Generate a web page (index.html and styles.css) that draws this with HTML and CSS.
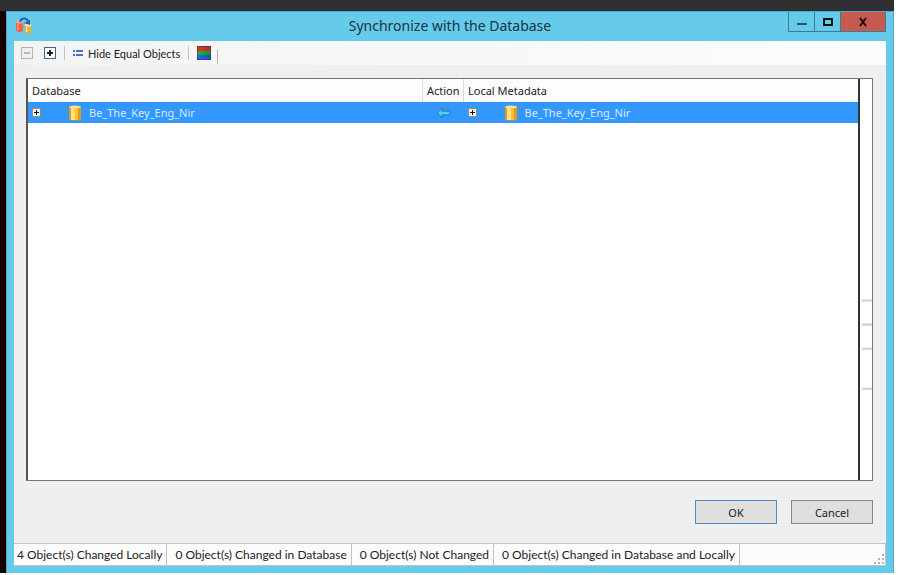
FILE: index.html
```html
<!DOCTYPE html>
<html lang="en">
<head>
    <meta charset="UTF-8">
    <meta name="viewport" content="width=device-width, initial-scale=1.0">
    <title>Synchronize with the Database</title>
    <link rel="stylesheet" href="styles.css">
</head>
<body>
    <div class="desktop">
        <main class="window">
            <header class="title-bar">
                <svg class="app-icon" width="18" height="18" viewBox="0 0 18 18">
                    <path d="M1 5v8c0 2.500 7 2.500 7 0V5z" fill="#f0614c"/>
                    <ellipse cx="4.500" cy="5" rx="3.500" ry="1.500" fill="#ffa792"/>
                    <path d="M3 7v6" stroke="#ffb3a3"/>
                    <path d="M10 8v7c0 2.500 6 2.500 6 0V8z" fill="#f0ae2b"/>
                    <ellipse cx="13" cy="8" rx="3" ry="1.500" fill="#ffe9a0"/>
                    <path d="M11.500 10v5" stroke="#fff0b5"/>
                    <path d="M5 5C6 1 11 0 13 4" fill="none" stroke="#2461b5" stroke-width="2"/>
                    <path d="M9 6l6-3v5z" fill="#2461b5"/>
                </svg>
                <h1 class="title">Synchronize with the Database</h1>
                <div class="window-buttons">
                    <button class="window-button" aria-label="Minimize">
                        <svg width="12" height="10" viewBox="0 0 12 10"><path d="M1 7h10" stroke="#2c5666" stroke-width="2"/></svg>
                    </button>
                    <button class="window-button" aria-label="Maximize">
                        <svg width="12" height="10" viewBox="0 0 12 10"><rect x="2" y="2" width="8" height="6" fill="none" stroke="#0b161b" stroke-width="2"/></svg>
                    </button>
                    <button class="window-button close" aria-label="Close">
                        <svg width="12" height="10" viewBox="0 0 12 10"><path d="M3 1l6 8M9 1L3 9" stroke="#1d0c0b" stroke-width="2"/></svg>
                    </button>
                </div>
            </header>

            <div class="client">
                <div class="toolbar">
                    <button class="tool" aria-label="Collapse all" disabled>
                        <svg width="12" height="12" viewBox="0 0 12 12"><rect x=".5" y=".5" width="11" height="11" fill="#f0f0f0" stroke="#b4b4b4"/><path d="M3 6h6" stroke="#aaa" stroke-width="1.500"/></svg>
                    </button>
                    <button class="tool" aria-label="Expand all">
                        <svg width="12" height="12" viewBox="0 0 12 12"><rect x=".5" y=".5" width="11" height="11" fill="#fff" stroke="#3f6992"/><path d="M3 6h6M6 3v6" stroke="#222" stroke-width="2"/></svg>
                    </button>
                    <span class="separator"></span>
                    <button class="tool">
                        <svg width="10" height="8" viewBox="0 0 10 8"><path d="M0 2h2M3 2h7M0 6h2M3 6h7" stroke="#4a70d6" stroke-width="2"/></svg>
                        Hide Equal Objects
                    </button>
                    <span class="separator"></span>
                    <button class="tool" aria-label="Colors">
                        <svg width="14" height="14" viewBox="0 0 14 14">
                            <defs>
                                <linearGradient id="shade"><stop offset="0" stop-opacity="0"/><stop offset="1" stop-opacity=".2"/></linearGradient>
                            </defs>
                            <rect width="14" height="5" fill="#e8342f"/>
                            <rect y="5" width="14" height="4" fill="#19b82c"/>
                            <rect y="9" width="14" height="5" fill="#2a62f0"/>
                            <rect width="14" height="14" fill="url(#shade)"/>
                            <rect x=".5" y=".5" width="13" height="13" fill="none" stroke="#333a50" stroke-opacity=".6"/>
                        </svg>
                    </button>
                    <span class="separator end"></span>
                </div>

                <div class="compare">
                    <div class="tree">
                        <table class="objects">
                            <colgroup>
                                <col>
                                <col class="action-col">
                                <col>
                            </colgroup>
                            <thead>
                                <tr>
                                    <th>Database</th>
                                    <th>Action</th>
                                    <th>Local Metadata</th>
                                </tr>
                            </thead>
                            <tbody>
                                <tr class="selected">
                                    <td>
                                        <div class="node">
                                            <button class="toggle" aria-label="Expand database">
                                                <svg width="9" height="9" viewBox="0 0 9 9"><rect x=".5" y=".5" width="8" height="8" fill="#f8f4ee" stroke="#8d8d8d"/><path d="M2 4.500h5M4.500 2v5" stroke="#111"/></svg>
                                            </button>
                                            <svg width="12" height="16" viewBox="0 0 12 16"><path d="M0 2v12c0 2 12 2 12 0V2z" fill="#e39a14"/><path d="M2 3h4v12H2z" fill="#ffe28a"/><path d="M6 3h3v12H6z" fill="#fbc037"/><ellipse cx="6" cy="2" rx="6" ry="1.500" fill="#ffe08a"/></svg>
                                            <span>Be_The_Key_Eng_Nir</span>
                                        </div>
                                    </td>
                                    <td class="action">
                                        <svg width="14" height="12" viewBox="0 0 14 12"><path d="M6 1L1 6l5 5V8h7V4H6z" fill="#3fbdec" stroke="#2b7fae"/><path d="M3 6h10" stroke="#55cdf2" stroke-width="2"/></svg>
                                    </td>
                                    <td>
                                        <div class="node">
                                            <button class="toggle" aria-label="Expand local metadata">
                                                <svg width="9" height="9" viewBox="0 0 9 9"><rect x=".5" y=".5" width="8" height="8" fill="#f8f4ee" stroke="#8d8d8d"/><path d="M2 4.500h5M4.500 2v5" stroke="#111"/></svg>
                                            </button>
                                            <svg width="12" height="16" viewBox="0 0 12 16"><path d="M0 2v12c0 2 12 2 12 0V2z" fill="#e39a14"/><path d="M2 3h4v12H2z" fill="#ffe28a"/><path d="M6 3h3v12H6z" fill="#fbc037"/><ellipse cx="6" cy="2" rx="6" ry="1.500" fill="#ffe08a"/></svg>
                                            <span>Be_The_Key_Eng_Nir</span>
                                        </div>
                                    </td>
                                </tr>
                            </tbody>
                        </table>
                    </div>
                    <!-- Overview strip: one tick per changed object -->
                    <svg class="overview">
                        <rect x="2" y="55%" width="10" height="2"/>
                        <rect x="2" y="61%" width="10" height="2"/>
                        <rect x="2" y="67%" width="10" height="2"/>
                        <rect x="2" y="77%" width="10" height="2"/>
                    </svg>
                </div>

                <div class="actions">
                    <button class="dialog-button default">OK</button>
                    <button class="dialog-button">Cancel</button>
                </div>

                <footer class="status-bar">
                    <span class="status">4 Object(s) Changed Locally</span>
                    <span class="status">0 Object(s) Changed in Database</span>
                    <span class="status">0 Object(s) Not Changed</span>
                    <span class="status">0 Object(s) Changed in Database and Locally</span>
                    <svg class="grip" width="12" height="12" viewBox="0 0 12 12"><path d="M9 1h2v2H9zM5 5h2v2H5zM9 5h2v2H9zM1 9h2v2H1zM5 9h2v2H5zM9 9h2v2H9z" fill="#b5b5b5"/></svg>
                </footer>
            </div>
        </main>
    </div>
</body>
</html>
```
FILE: styles.css
```css
* {
    box-sizing: border-box;
}
body {
    margin: 0;
    padding: 0 6px 2px 0;
    height: 100vh;
    background-color: #fff;
    color: #222;
    font-family: "Noto Sans", "Open Sans", sans-serif;
    font-size: 11px;
}
button {
    font: inherit;
    color: inherit;
    padding: 0;
    margin: 0;
    border: none;
    background: none;
}
svg {
    display: block;
    flex: none;
}
.desktop {
    height: 100%;
    padding: 11px 0 0 6px;
    background: linear-gradient(#303033 11px, #180000 11px);
}
.window {
    display: flex;
    flex-direction: column;
    height: 100%;
    padding: 0 7px 6px;
    border: 1px solid #4fa6c6;
    border-bottom-color: #66caea;
    background-color: #66caea;
}
.title-bar {
    display: grid;
    grid-template-columns: 1fr auto 1fr;
    height: 29px;
}
.app-icon {
    margin: 5px 0 0 1px;
}
.title {
    margin: 0;
    font-size: 14px;
    font-weight: normal;
    line-height: 28px;
    color: #17343f;
}
.window-buttons {
    display: flex;
    justify-self: end;
    height: 20px;
    border: 1px solid #3f7b90;
    border-top: none;
}
.window-button {
    display: flex;
    align-items: center;
    justify-content: center;
    width: 26px;
    border-right: 1px solid #3f7b90;
}
.window-button.close {
    width: 44px;
    border-right: none;
    background-color: #c75a50;
}
.client {
    display: flex;
    flex-direction: column;
    flex: 1;
    min-height: 0;
    background-color: #efefef;
}
.toolbar {
    display: flex;
    align-items: center;
    gap: 6px;
    height: 24px;
    padding-left: 7px;
    font-family: Lato, "Noto Sans", sans-serif;
    background: linear-gradient(to right, #f3f3f3, #fcfcfc);
}
.tool {
    display: flex;
    align-items: center;
    gap: 5px;
}
.tool + .tool {
    margin-left: 5px;
}
.separator {
    width: 1px;
    height: 14px;
    margin: 0 2px;
    background-color: #c4c4c4;
}
.separator.end {
    margin: 8px 0 0;
    background-color: #b5b5b5;
}
.compare {
    display: flex;
    flex: 1;
    margin: 13px 13px 0 12px;
    min-height: 0;
    background-color: #fff;
    border: 1px solid #777;
    border-left: none;
}
.tree {
    flex: 1;
    border-left: 2px solid #555;
    border-right: 2px solid #333;
}
.objects {
    width: 100%;
    table-layout: fixed;
    border-collapse: collapse;
}
.action-col {
    width: 41px;
}
.objects th {
    height: 23px;
    padding: 0 4px;
    text-align: left;
    font-weight: normal;
    white-space: nowrap;
    background-color: #fdfdfd;
    border-right: 1px solid #dcdcdc;
}
.objects th:last-child {
    border-right: none;
}
.objects td {
    height: 21px;
    padding: 0 4px;
}
.selected {
    background-color: #3397fd;
    color: #d8ebff;
}
.node {
    display: flex;
    align-items: center;
    gap: 8px;
}
.toggle {
    margin-right: 20px;
}
.objects .action {
    padding: 0;
}
.action svg {
    margin: 0 auto;
}
.overview {
    width: 12px;
    height: 100%;
    fill: #b9dcb9;
}
.actions {
    display: flex;
    justify-content: flex-end;
    gap: 14px;
    padding: 19px 13px 19px;
}
.dialog-button {
    width: 82px;
    height: 24px;
    background-color: #dfdfdf;
    border: 1px solid #888;
}
.dialog-button.default {
    border-color: #4a8fca;
}
.status-bar {
    display: flex;
    height: 23px;
    font-family: Lato, "Noto Sans", sans-serif;
    font-size: 12px;
    background-color: #fcfcfc;
    border: 1px solid #c3c3c3;
    border-left: none;
}
.status {
    padding: 0 4px 0 8px;
    line-height: 21px;
    white-space: nowrap;
    border-right: 1px solid #c3c3c3;
}
.status:first-child {
    padding-left: 3px;
}
.grip {
    align-self: flex-end;
    margin-left: auto;
}
```
